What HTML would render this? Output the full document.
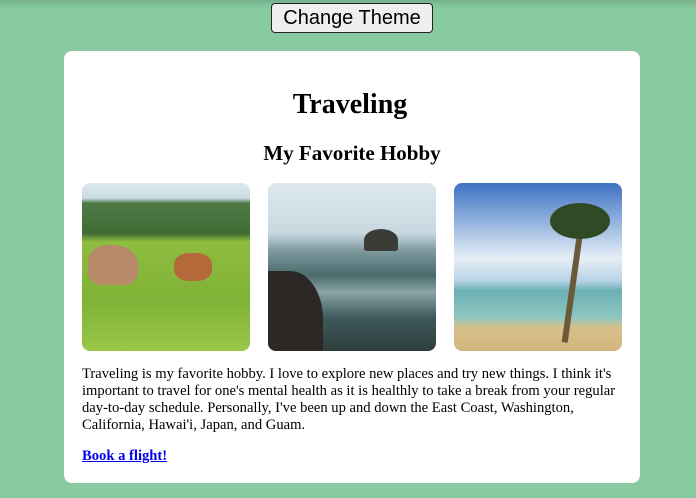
<!DOCTYPE html>
<html><head><style>
html,body{margin:0;padding:0}
body{width:696px;height:498px;background:#88cba0;overflow:hidden;position:relative;font-family:"Liberation Serif",serif;box-shadow:inset 0 8px 8px -6px rgba(0,0,0,.2)}
.btn{position:absolute;left:271px;top:3px;width:162px;height:30px;background:#efefef;border:1px solid #222;border-radius:4px;font:20px "Liberation Sans",sans-serif;text-align:center;line-height:28px;box-sizing:border-box;color:#000}
.card{position:absolute;left:64px;top:51px;width:576px;height:432px;background:#fff;border-radius:8px}
h1{position:absolute;top:88px;left:2px;width:100%;margin:0;text-align:center;font-size:28px;line-height:34px}
h1,h2{font-weight:bold}
h2{position:absolute;top:140px;left:4px;width:100%;margin:0;text-align:center;font-size:21px;line-height:26px}
.im{position:absolute;top:183px;width:168px;height:168px;border-radius:8px;overflow:hidden}
p{position:absolute;left:82px;top:366px;width:545px;margin:0;font-size:14.6px;line-height:17px}
a{position:absolute;left:82px;top:448px;font-size:14.6px;font-weight:bold;color:#00e;text-decoration:underline}
</style></head><body>
<div class="btn">Change Theme</div>
<div class="card"></div>
<h1>Traveling</h1>
<h2>My Favorite Hobby</h2>
<div class="im" style="left:82px;background:linear-gradient(#dfe9ef 0,#c9dbe4 9%,#4e7a46 12%,#3f6b34 30%,#8fbd3f 35%,#7fb236 70%,#9ac848 100%)">
<div style="position:absolute;left:6px;top:62px;width:50px;height:40px;background:#b88a6a;border-radius:40% 50% 30% 30%"></div>
<div style="position:absolute;left:92px;top:70px;width:38px;height:28px;background:#b5683a;border-radius:40%"></div>
</div>
<div class="im" style="left:268px;background:linear-gradient(#dde8ef 0,#c9d8e0 30%,#7f9aa0 40%,#4a6a6c 55%,#8aa4a6 65%,#3e5a5c 80%,#2f3e3c 100%)">
<div style="position:absolute;left:0;top:88px;width:55px;height:80px;background:#2c2826;border-radius:0 60% 0 0"></div>
<div style="position:absolute;left:96px;top:46px;width:34px;height:22px;background:#3c3c36;border-radius:50% 50% 10% 10%"></div>
</div>
<div class="im" style="left:454px;background:linear-gradient(#3f72c4 0,#9ab8e0 25%,#e6eef6 45%,#b8d4e6 58%,#6ab0b4 64%,#8ec6c0 80%,#d8c08a 86%,#d2b57e 100%)">
<div style="position:absolute;left:116px;top:40px;width:6px;height:120px;background:#6b5a3a;transform:rotate(8deg)"></div>
<div style="position:absolute;left:96px;top:20px;width:60px;height:36px;background:#2f4a24;border-radius:50%"></div>
</div>
<p>Traveling is my favorite hobby. I love to explore new places and try new things. I think it's important to travel for one's mental health as it is healthly to take a break from your regular day-to-day schedule. Personally, I've been up and down the East Coast, Washington, California, Hawai'i, Japan, and Guam.</p>
<a>Book a flight!</a>
</body></html>
